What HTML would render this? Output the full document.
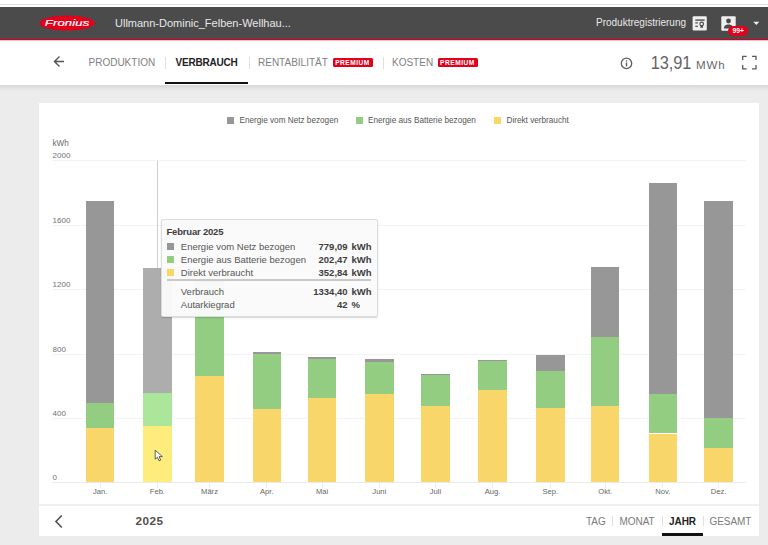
<!DOCTYPE html>
<html><head><meta charset="utf-8">
<style>
*{margin:0;padding:0;box-sizing:border-box}
html,body{width:768px;height:545px;overflow:hidden;background:#ebeceb;font-family:"Liberation Sans",sans-serif;position:relative}
.abs{position:absolute}
#topstrip{position:absolute;left:0;top:0;width:768px;height:7px;background:#fff}
#topstrip:after{content:"";position:absolute;left:0;top:4px;width:768px;height:1px;background:#e2e2e2}
#hdr{position:absolute;left:0;top:7px;width:768px;height:32px;background:#4b4b4b}
#redline{position:absolute;left:0;top:39px;width:768px;height:1px;background:#d5001c}
#redline2{position:absolute;left:0;top:40px;width:768px;height:1px;background:#f3b8c0}
#nav{position:absolute;left:0;top:41px;width:768px;height:44px;background:#fff}
#shadow{position:absolute;left:0;top:85px;width:768px;height:6px;background:linear-gradient(#d6d7d6,#ebeceb)}
.site{position:absolute;left:115px;top:17px;font-size:11px;color:#e8e8e8;white-space:nowrap;line-height:12px}
.preg{position:absolute;left:596px;top:17px;font-size:10px;color:#e8e8e8;white-space:nowrap;line-height:11px}
.navt{position:absolute;top:57px;font-size:10px;line-height:11px;color:#808080;white-space:nowrap;letter-spacing:0px}
.navt.b{font-weight:bold;color:#222;letter-spacing:-0.2px;font-size:10px}
.prem{position:absolute;top:58.2px;height:9px;width:39.8px;border-radius:1.5px;background:#e2001a;color:#fff;font-size:6.6px;font-weight:bold;line-height:9.4px;letter-spacing:0.5px;padding-left:2.3px;white-space:nowrap}
.vdiv{position:absolute;width:1px;background:#e0e0e0}
#card{position:absolute;left:39px;top:103.4px;width:720px;height:432.6px;background:#fff}
.leg{position:absolute;top:115.5px;font-size:8.2px;line-height:9px;color:#555;white-space:nowrap}
.sq{position:absolute;width:7px;height:7px}
.gl{position:absolute;left:52px;width:694px;height:1px;background:#f3f3f3}
.yl{position:absolute;left:52.5px;font-size:8px;line-height:8px;color:#707070;letter-spacing:0.05px}
.bar{position:absolute;width:28.6px}
.tick{position:absolute;top:482px;width:1px;height:6px;background:#ededed}
.xl{position:absolute;top:488px;width:60px;text-align:center;font-size:7.6px;line-height:8px;color:#666}
.xh{position:absolute;left:157px;top:160.5px;width:1px;height:322px;background:#cfcfcf}
#tt{position:absolute;left:161.2px;top:218.8px;width:217.3px;height:98px;background:rgba(250,250,250,0.965);border:1px solid #dcdcdc;border-radius:2px;box-shadow:0 1px 1.5px rgba(0,0,0,0.16)}
.tt{position:absolute;font-size:9.5px;line-height:10px;color:#555;white-space:nowrap}
.ttb{position:absolute;font-size:9.5px;line-height:10px;color:#3c3c3c;font-weight:bold;white-space:nowrap;text-align:right}
.btm{position:absolute;top:516.3px;font-size:10px;line-height:11px;color:#7a7a7a;letter-spacing:-0.05px;white-space:nowrap}
</style></head><body>
<div id="topstrip"></div>
<div id="hdr"></div>
<div id="redline"></div><div id="redline2"></div>
<!-- logo -->
<svg class="abs" style="left:39px;top:15px" width="56" height="16" viewBox="0 0 56 16">
 <ellipse cx="28" cy="8" rx="27.6" ry="7.6" fill="#e2001a"/>
 <g transform="translate(28.1,10.8) scale(1.45,1)"><text x="0" y="0" text-anchor="middle" font-family="Liberation Sans" font-style="italic" font-size="9" fill="#fff" stroke="#fff" stroke-width="0.2" letter-spacing="0.1">Fronius</text></g>
</svg>
<div class="site">Ullmann-Dominic_Felben-Wellhau...</div>
<div class="preg">Produktregistrierung</div>
<!-- cert icon -->
<svg class="abs" style="left:692px;top:16px" width="15" height="15" viewBox="0 0 15 15">
 <rect x="0.6" y="0.2" width="14.2" height="14.2" rx="1.2" fill="#efefef"/>
 <rect x="3.3" y="3.4" width="9.3" height="1.4" fill="#4b4b4b"/>
 <rect x="3.3" y="6.3" width="2.6" height="1.2" fill="#4b4b4b"/>
 <rect x="3.3" y="9.7" width="2.6" height="1.2" fill="#4b4b4b"/>
 <circle cx="9.7" cy="7.9" r="1.8" fill="none" stroke="#4b4b4b" stroke-width="1.2"/>
 <path d="M8.5 9.4 L8.5 12.3 L9.7 11.4 L10.9 12.3 L10.9 9.4 Z" fill="#4b4b4b"/>
</svg>
<!-- profile icon -->
<svg class="abs" style="left:721px;top:16px" width="15" height="15" viewBox="0 0 15 15">
 <rect x="0.3" y="0.3" width="14.4" height="14.4" rx="1" fill="#efefef"/>
 <circle cx="7.5" cy="5" r="2.4" fill="#4b4b4b"/>
 <path d="M2.8 12.5 C3 9.3 5 8.4 7.5 8.4 C10 8.4 12 9.3 12.2 12.5 Z" fill="#4b4b4b"/>
</svg>
<div class="abs" style="left:728px;top:26px;width:20.3px;height:9.5px;border-radius:5px;background:#e2001a;color:#fff;font-size:6.8px;font-weight:bold;line-height:9.5px;text-align:center">99+</div>
<svg class="abs" style="left:753px;top:21px" width="7" height="5" viewBox="0 0 7 5"><path d="M0.3 0.8 L6.3 0.8 L3.3 4 Z" fill="#eee"/></svg>

<div id="nav"></div>
<div id="shadow"></div>
<!-- back arrow -->
<svg class="abs" style="left:53px;top:56px" width="12" height="11" viewBox="0 0 12 11">
 <path d="M11 5.5 H1.5 M6.5 0.6 L1.5 5.5 L6.5 10.4" fill="none" stroke="#555" stroke-width="1.4"/>
</svg>
<div class="navt" style="left:88.5px">PRODUKTION</div>
<div class="vdiv" style="left:165px;top:57px;height:12px"></div>
<div class="navt b" style="left:175.5px">VERBRAUCH</div>
<div class="abs" style="left:165px;top:81.5px;width:83px;height:2.6px;background:#111"></div>
<div class="vdiv" style="left:248.5px;top:57px;height:12px"></div>
<div class="navt" style="left:258px">RENTABILITÄT</div>
<div class="prem" style="left:332.9px">PREMIUM</div>
<div class="vdiv" style="left:382.5px;top:57px;height:12px"></div>
<div class="navt" style="left:392px">KOSTEN</div>
<div class="prem" style="left:437.8px">PREMIUM</div>
<!-- info -->
<svg class="abs" style="left:620px;top:57px" width="13" height="13" viewBox="0 0 13 13">
 <circle cx="6.5" cy="6.4" r="5.2" fill="none" stroke="#5e5e5e" stroke-width="1.3"/>
 <rect x="5.85" y="5.6" width="1.3" height="3.8" fill="#555"/>
 <rect x="5.85" y="3.3" width="1.3" height="1.3" fill="#555"/>
</svg>
<div class="abs" style="left:650.8px;top:54px;font-size:16.4px;line-height:18px;color:#646464;letter-spacing:-0.1px;white-space:nowrap;transform:scaleY(1.12);transform-origin:0 14px">13,91</div>
<div class="abs" style="left:696px;top:59px;font-size:11.6px;line-height:12px;color:#666;letter-spacing:0.8px;white-space:nowrap">MWh</div>
<!-- fullscreen -->
<svg class="abs" style="left:741px;top:55px" width="16" height="15" viewBox="0 0 16 15">
 <path d="M1.7 5 V1.4 H5.6 M11 1.4 H15 V5 M15 10 V13.9 H11 M5.6 13.9 H1.7 V10" fill="none" stroke="#5a5a5a" stroke-width="1.3"/>
</svg>

<div id="card"></div>
<!-- legend -->
<div class="sq" style="left:227px;top:116.5px;background:#979797"></div>
<div class="leg" style="left:239.5px">Energie vom Netz bezogen</div>
<div class="sq" style="left:356px;top:116.5px;background:#92cd82"></div>
<div class="leg" style="left:368px">Energie aus Batterie bezogen</div>
<div class="sq" style="left:494px;top:116.5px;background:#f9d66a"></div>
<div class="leg" style="left:506.5px">Direkt verbraucht</div>
<div class="abs" style="left:52.5px;top:139.5px;font-size:8.2px;line-height:8px;color:#6a6a6a">kWh</div>

<div class="gl" style="top:159.8px"></div>
<div class="yl" style="top:152.1px">2000</div>
<div class="gl" style="top:224.5px"></div>
<div class="yl" style="top:216.8px">1600</div>
<div class="gl" style="top:289.0px"></div>
<div class="yl" style="top:281.3px">1200</div>
<div class="gl" style="top:353.5px"></div>
<div class="yl" style="top:345.8px">800</div>
<div class="gl" style="top:417.8px"></div>
<div class="yl" style="top:410.1px">400</div>
<div class="gl" style="top:481.7px;background:#ebebeb"></div>
<div class="yl" style="top:474.0px">0</div>
<div class="xh"></div>
<div class="bar" style="left:85.8px;top:201.0px;height:201.8px;background:#979797"></div>
<div class="bar" style="left:85.8px;top:402.8px;height:24.8px;background:#92cd82"></div>
<div class="bar" style="left:85.8px;top:427.6px;height:54.6px;background:#f9d66a"></div>
<div class="tick" style="left:99.6px"></div>
<div class="xl" style="left:70.1px">Jan.</div>
<div class="bar" style="left:143.1px;top:268.3px;height:125.0px;background:#adadad"></div>
<div class="bar" style="left:143.1px;top:393.3px;height:32.4px;background:#abe69b"></div>
<div class="bar" style="left:143.1px;top:425.7px;height:56.5px;background:#feec7d"></div>
<div class="tick" style="left:156.9px"></div>
<div class="xl" style="left:127.4px">Feb.</div>
<div class="bar" style="left:195.2px;top:281.0px;height:1.0px;background:#979797"></div>
<div class="bar" style="left:195.2px;top:282.0px;height:93.6px;background:#92cd82"></div>
<div class="bar" style="left:195.2px;top:375.6px;height:106.6px;background:#f9d66a"></div>
<div class="tick" style="left:209.0px"></div>
<div class="xl" style="left:179.5px">März</div>
<div class="bar" style="left:252.5px;top:352.0px;height:1.5px;background:#979797"></div>
<div class="bar" style="left:252.5px;top:353.5px;height:55.3px;background:#92cd82"></div>
<div class="bar" style="left:252.5px;top:408.8px;height:73.4px;background:#f9d66a"></div>
<div class="tick" style="left:266.3px"></div>
<div class="xl" style="left:236.8px">Apr.</div>
<div class="bar" style="left:307.8px;top:357.2px;height:1.4px;background:#979797"></div>
<div class="bar" style="left:307.8px;top:358.6px;height:39.3px;background:#92cd82"></div>
<div class="bar" style="left:307.8px;top:397.9px;height:84.3px;background:#f9d66a"></div>
<div class="tick" style="left:321.6px"></div>
<div class="xl" style="left:292.1px">Mai</div>
<div class="bar" style="left:365.0px;top:359.2px;height:2.6px;background:#979797"></div>
<div class="bar" style="left:365.0px;top:361.8px;height:31.8px;background:#92cd82"></div>
<div class="bar" style="left:365.0px;top:393.6px;height:88.6px;background:#f9d66a"></div>
<div class="tick" style="left:378.8px"></div>
<div class="xl" style="left:349.3px">Juni</div>
<div class="bar" style="left:421.1px;top:373.8px;height:0.9px;background:#979797"></div>
<div class="bar" style="left:421.1px;top:374.7px;height:30.9px;background:#92cd82"></div>
<div class="bar" style="left:421.1px;top:405.6px;height:76.6px;background:#f9d66a"></div>
<div class="tick" style="left:434.9px"></div>
<div class="xl" style="left:405.4px">Juli</div>
<div class="bar" style="left:478.3px;top:359.9px;height:1.1px;background:#979797"></div>
<div class="bar" style="left:478.3px;top:361.0px;height:29.1px;background:#92cd82"></div>
<div class="bar" style="left:478.3px;top:390.1px;height:92.1px;background:#f9d66a"></div>
<div class="tick" style="left:492.1px"></div>
<div class="xl" style="left:462.6px">Aug.</div>
<div class="bar" style="left:536.0px;top:355.4px;height:15.3px;background:#979797"></div>
<div class="bar" style="left:536.0px;top:370.7px;height:37.0px;background:#92cd82"></div>
<div class="bar" style="left:536.0px;top:407.7px;height:74.5px;background:#f9d66a"></div>
<div class="tick" style="left:549.8px"></div>
<div class="xl" style="left:520.3px">Sep.</div>
<div class="bar" style="left:590.9px;top:267.0px;height:69.7px;background:#979797"></div>
<div class="bar" style="left:590.9px;top:336.7px;height:69.6px;background:#92cd82"></div>
<div class="bar" style="left:590.9px;top:406.3px;height:75.9px;background:#f9d66a"></div>
<div class="tick" style="left:604.7px"></div>
<div class="xl" style="left:575.2px">Okt.</div>
<div class="bar" style="left:648.5px;top:183.2px;height:210.5px;background:#979797"></div>
<div class="bar" style="left:648.5px;top:393.7px;height:39.8px;background:#92cd82"></div>
<div class="bar" style="left:648.5px;top:433.5px;height:48.7px;background:#f9d66a"></div>
<div class="tick" style="left:662.3px"></div>
<div class="xl" style="left:632.8px">Nov.</div>
<div class="bar" style="left:704.3px;top:201.0px;height:216.9px;background:#979797"></div>
<div class="bar" style="left:704.3px;top:417.9px;height:29.7px;background:#92cd82"></div>
<div class="bar" style="left:704.3px;top:447.6px;height:34.6px;background:#f9d66a"></div>
<div class="tick" style="left:718.1px"></div>
<div class="xl" style="left:688.6px">Dez.</div>

<!-- cursor -->
<svg class="abs" style="left:154px;top:449px" width="11" height="13" viewBox="0 0 11 13">
 <path d="M1.2 1.2 L1.2 10.2 L3.4 8.2 L5.1 11.8 L6.7 11.1 L5.1 7.6 L8.4 7.6 Z" fill="#fff" stroke="#3a3a3a" stroke-width="0.8"/>
</svg>

<!-- tooltip -->
<div id="tt"></div>
<div class="ttb" style="left:166.5px;top:226.5px;text-align:left;letter-spacing:-0.2px">Februar 2025</div>
<div class="sq" style="left:166.7px;top:242.7px;background:#979797"></div>
<div class="tt" style="left:180.8px;top:241.5px">Energie vom Netz bezogen</div>
<div class="sq" style="left:166.7px;top:256px;background:#92cd82"></div>
<div class="tt" style="left:180.8px;top:254.5px">Energie aus Batterie bezogen</div>
<div class="sq" style="left:166.7px;top:269.3px;background:#f9d66a"></div>
<div class="tt" style="left:180.8px;top:268px">Direkt verbraucht</div>
<div class="ttb" style="left:297.6px;width:50px;top:241.5px">779,09</div>
<div class="ttb" style="left:297.6px;width:50px;top:254.5px">202,47</div>
<div class="ttb" style="left:297.6px;width:50px;top:268px">352,84</div>
<div class="ttb" style="left:351.5px;top:241.5px;text-align:left">kWh</div>
<div class="ttb" style="left:351.5px;top:254.5px;text-align:left">kWh</div>
<div class="ttb" style="left:351.5px;top:268px;text-align:left">kWh</div>
<div class="abs" style="left:166.7px;top:279px;width:204.5px;height:1.5px;background:#c9c9c9"></div>
<div class="tt" style="left:180.8px;top:286.8px">Verbrauch</div>
<div class="tt" style="left:180.8px;top:299.8px">Autarkiegrad</div>
<div class="ttb" style="left:297.6px;width:50px;top:286.8px">1334,40</div>
<div class="ttb" style="left:297.6px;width:50px;top:299.8px">42</div>
<div class="ttb" style="left:351.5px;top:286.8px;text-align:left">kWh</div>
<div class="ttb" style="left:351.5px;top:299.8px;text-align:left">%</div>

<!-- bottom bar -->
<div class="abs" style="left:39px;top:504px;width:720px;height:1.5px;background:#f0f0f0"></div>
<svg class="abs" style="left:54px;top:514px" width="10" height="15" viewBox="0 0 10 15">
 <path d="M7.8 1.5 L2 7.5 L7.8 13.5" fill="none" stroke="#555" stroke-width="1.7"/>
</svg>
<div class="abs" style="left:135.5px;top:514.5px;font-size:11.7px;line-height:12px;font-weight:bold;color:#505050;letter-spacing:0.5px">2025</div>
<div class="btm" style="left:586px">TAG</div>
<div class="vdiv" style="left:612px;top:516px;height:10px"></div>
<div class="btm" style="left:619.5px">MONAT</div>
<div class="vdiv" style="left:662px;top:516px;height:10px"></div>
<div class="btm" style="left:669px;font-weight:bold;color:#222">JAHR</div>
<div class="abs" style="left:662px;top:533.3px;width:40.6px;height:2.5px;background:#111"></div>
<div class="vdiv" style="left:703px;top:516px;height:10px"></div>
<div class="btm" style="left:709.5px">GESAMT</div>
</body></html>
